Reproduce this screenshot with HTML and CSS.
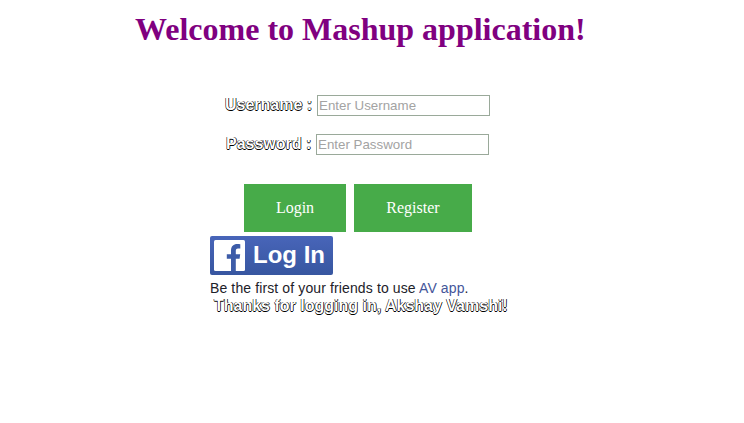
FILE: index.html
```html
<!DOCTYPE html>
<html lang="en">
<head>
<meta charset="utf-8">
<title>Mashup application</title>
<link rel="stylesheet" href="styles.css">
</head>
<body>
<h1 class="title">Welcome to Mashup application!</h1>
<form class="form">
  <div class="field"><label class="outlined" for="user">Username :</label><input id="user" type="text" placeholder="Enter Username"></div>
  <div class="field field-password"><label class="outlined" for="pass">Password :</label><input id="pass" type="password" placeholder="Enter Password"></div>
  <div class="actions">
    <button class="btn login" type="button">Login</button>
    <button class="btn register" type="button">Register</button>
  </div>
</form>
<section class="social">
  <button class="fb" type="button">
    <svg class="fb-logo" viewBox="0 0 31 31" width="31" height="31" aria-hidden="true">
      <rect width="31" height="31" rx="1.5" fill="#fff"/>
      <path d="M17 31V18.800H12.800V14.200H17V10.500C17 6.200 19.500 4 23.300 4C24.700 4 25.900 4.100 26.300 4.200V8.500H24C22.200 8.500 21.800 9.600 21.800 11V14.200H26.200L25.600 18.800H21.800V31Z" fill="#3d5ca8"/>
    </svg>
    <span class="fb-text">Log In</span>
  </button>
  <p class="friends">Be the first of your friends to use <a href="#">AV app</a>.</p>
  <p class="status outlined">Thanks for logging in, Akshay Vamshi!</p>
</section>
</body>
</html>
```
FILE: styles.css
```css
body {
  margin: 0;
  background: #fff;
  font-family: "Liberation Sans", sans-serif;
}
.title {
  margin: 10px 0 0 135px;
  font: bold 32px/38px "Liberation Serif", serif;
  color: #800080;
  white-space: nowrap;
}
.form {
  margin: 47px 0 0 225px;
}
.field {
  display: flex;
  align-items: center;
  height: 21px;
}
.field label {
  width: 92px;
  position: relative;
  top: -1px;
}
.field-password {
  margin: 18px 0 0 1px;
}
.field-password label {
  width: 90px;
}
.field input {
  box-sizing: border-box;
  width: 173px;
  height: 21px;
  padding: 1px;
  border: 1px solid #9aa99a;
  font: 13.333px "Liberation Sans", sans-serif;
  background: #fff;
}
.field input::placeholder {
  color: #a3a3a3;
}
.outlined {
  font-size: 16px;
  font-weight: bold;
  line-height: 18px;
  color: #fff;
  text-shadow: -0.5px 0 #000, 0.75px 0 #000, 0 0.5px #000;
  white-space: nowrap;
}
.actions {
  display: flex;
  gap: 8px;
  margin: 29px 0 0 19px;
}
.btn {
  height: 48px;
  padding: 0;
  border: 0;
  background: #47ab49;
  color: #fff;
  font: 16px "Liberation Serif", serif;
}
.login {
  width: 102px;
}
.register {
  width: 118px;
}
.social {
  margin: 4px 0 0 210px;
}
.fb {
  display: flex;
  align-items: center;
  gap: 8px;
  box-sizing: border-box;
  width: 123px;
  height: 39px;
  padding: 0 0 0 4px;
  border: 0;
  border-radius: 2px;
  background: linear-gradient(#4865b9, #3756a0);
  color: #fff;
  font: bold 24px/30px "Liberation Sans", sans-serif;
  white-space: nowrap;
}
.fb-text {
  margin-top: -2px;
}
.friends {
  margin: 4px 0 0;
  font-size: 14px;
  line-height: 18px;
  letter-spacing: 0.12px;
  color: #1d2129;
}
.friends a {
  color: #44569a;
  text-decoration: none;
}
.status {
  margin: 0 0 0 4px;
}
```
